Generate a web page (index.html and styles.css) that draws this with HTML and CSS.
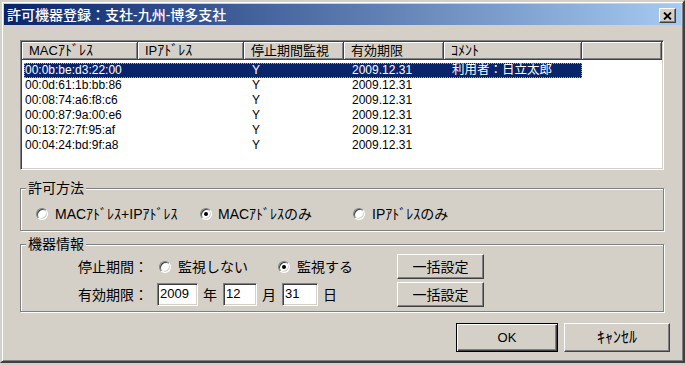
FILE: index.html
```html
<!DOCTYPE html>
<html lang="ja">
<head>
<meta charset="utf-8">
<title>許可機器登録</title>
<link rel="stylesheet" href="styles.css">
</head>
<body>
<div class="window">
  <div class="titlebar">
    <span class="title">許可機器登録：支社-九州-博多支社</span>
    <button class="close" type="button" aria-label="閉じる">
      <svg width="9" height="8" viewBox="0 0 9 8"><path d="M1 0.5L8 7.5M8 0.5L1 7.5" stroke="#000" stroke-width="1.8" fill="none"/></svg>
    </button>
  </div>
  <div class="client">
    <div class="listview">
      <div class="lv-head">
        <div class="hcell c1">MAC<span class="kana">ｱﾄﾞﾚｽ</span></div>
        <div class="hcell c2">IP<span class="kana">ｱﾄﾞﾚｽ</span></div>
        <div class="hcell c3">停止期間監視</div>
        <div class="hcell c4">有効期限</div>
        <div class="hcell c5"><span class="kana">ｺﾒﾝﾄ</span></div>
        <div class="hcell c6"></div>
      </div>
      <div class="lv-body">
        <div class="row selected"><span class="cell c1">00:0b:be:d3:22:00</span><span class="cell c2"></span><span class="cell c3">Y</span><span class="cell c4">2009.12.31</span><span class="cell c5 cjk">利用者：日立太郎</span></div>
        <div class="row"><span class="cell c1">00:0d:61:1b:bb:86</span><span class="cell c2"></span><span class="cell c3">Y</span><span class="cell c4">2009.12.31</span><span class="cell c5"></span></div>
        <div class="row"><span class="cell c1">00:08:74:a6:f8:c6</span><span class="cell c2"></span><span class="cell c3">Y</span><span class="cell c4">2009.12.31</span><span class="cell c5"></span></div>
        <div class="row"><span class="cell c1">00:00:87:9a:00:e6</span><span class="cell c2"></span><span class="cell c3">Y</span><span class="cell c4">2009.12.31</span><span class="cell c5"></span></div>
        <div class="row"><span class="cell c1">00:13:72:7f:95:af</span><span class="cell c2"></span><span class="cell c3">Y</span><span class="cell c4">2009.12.31</span><span class="cell c5"></span></div>
        <div class="row"><span class="cell c1">00:04:24:bd:9f:a8</span><span class="cell c2"></span><span class="cell c3">Y</span><span class="cell c4">2009.12.31</span><span class="cell c5"></span></div>
      </div>
    </div>

    <div class="group group-method">
      <span class="group-label">許可方法</span>
      <div class="radio-row">
        <label class="radio-item m1"><span class="radio"></span>MACｱﾄﾞﾚｽ+IPｱﾄﾞﾚｽ</label>
        <label class="radio-item m2"><span class="radio checked"></span>MACｱﾄﾞﾚｽのみ</label>
        <label class="radio-item m3"><span class="radio"></span>IPｱﾄﾞﾚｽのみ</label>
      </div>
    </div>

    <div class="group group-info">
      <span class="group-label">機器情報</span>
      <div class="info-grid">
        <span class="field-label">停止期間：</span>
        <div class="field radios">
          <label class="radio-item s1"><span class="radio"></span>監視しない</label>
          <label class="radio-item s2"><span class="radio checked"></span>監視する</label>
        </div>
        <button class="btn bulk" type="button">一括設定</button>

        <span class="field-label">有効期限：</span>
        <div class="field dates">
          <span class="textbox w-year">2009</span><span class="unit">年</span>
          <span class="textbox w-month">12</span><span class="unit">月</span>
          <span class="textbox w-day">31</span><span class="unit">日</span>
        </div>
        <button class="btn bulk" type="button">一括設定</button>
      </div>
    </div>

    <div class="footer">
      <button class="btn default ok" type="button">OK</button>
      <button class="btn cancel" type="button">ｷｬﾝｾﾙ</button>
    </div>
  </div>
</div>
</body>
</html>
```

FILE: styles.css
```css
* { box-sizing: border-box; }

html, body {
  margin: 0;
  padding: 0;
  background: #d4d0c8;
}

body {
  font-family: "Liberation Sans", "Noto Sans CJK JP", sans-serif;
  font-size: 14px;
  color: #000;
}

.window {
  width: 685px;
  height: 363px;
  border: 2px solid;
  border-color: #d4d0c8 #404040 #404040 #d4d0c8;
  box-shadow: inset 1px 1px #fff, inset -1px -1px #808080;
  padding: 2px;
  background: #d4d0c8;
  display: flex;
  flex-direction: column;
}

/* Title bar */
.titlebar {
  height: 21px;
  display: flex;
  align-items: center;
  justify-content: space-between;
  padding: 0 5px 0 3px;
  background: linear-gradient(to right, #0a246a, #a6caf0);
}

.title {
  color: #fff;
  font-size: 14px;
  line-height: 16px;
  font-weight: 500;
  white-space: nowrap;
}

.close {
  width: 17px;
  height: 15px;
  margin-top: 2px;
  padding: 0;
  display: flex;
  align-items: center;
  justify-content: center;
  background: #d4d0c8;
  border: 1px solid;
  border-color: #fff #404040 #404040 #fff;
  box-shadow: inset -1px -1px #808080;
}

/* Client area */
.client {
  display: flex;
  flex-direction: column;
  padding: 15px 11px 0 16px;
}

/* List view */
.listview {
  width: 644px;
  height: 130px;
  border: 1px solid;
  border-color: #808080 #fff #fff #808080;
  box-shadow: inset 1px 1px #404040, inset -1px -1px #d4d0c8;
  padding: 1px;
  background: #fff;
  overflow: hidden;
}

.lv-head {
  display: flex;
  height: 18px;
}

.hcell {
  height: 18px;
  padding-left: 7px;
  font-size: 13px;
  line-height: 17px;
  white-space: nowrap;
  background: #d4d0c8;
  border-right: 1px solid #404040;
  border-bottom: 1px solid #404040;
  box-shadow: inset 1px 1px #fff, inset -1px -1px #808080;
}

.hcell .kana { font-size: 14px; }

.hcell.c1 { width: 116px; }
.hcell.c2 { width: 106px; }
.hcell.c3 { width: 100px; }
.hcell.c4 { width: 100px; }
.hcell.c5 { width: 138px; }
.hcell.c6 { flex: 1; }

.lv-body {
  padding: 3px 0 0 2px;
}

.row {
  display: flex;
  width: 558px;
  height: 15px;
  font-size: 12px;
  line-height: 15px;
  white-space: nowrap;
}

.row.selected {
  background: #0a246a;
  color: #fff;
  outline: 1px dotted #9aa6c4;
  outline-offset: -1px;
}

.cell { display: block; overflow: hidden; }
.cell.c1 { width: 114px; padding-left: 1px; }
.cell.c2 { width: 106px; }
.cell.c3 { width: 100px; padding-left: 8px; }
.cell.c4 { width: 100px; padding-left: 8px; }
.cell.c5 { width: 138px; padding-left: 8px; }
.cell.cjk { font-size: 12.5px; }

/* Group boxes */
.group {
  position: relative;
  width: 644px;
  border: 1px solid #808080;
  box-shadow: inset 1px 1px #fff, 1px 1px #fff;
}

.group-label {
  position: absolute;
  top: -9px;
  left: 5px;
  padding: 0 2px;
  background: #d4d0c8;
  font-size: 14px;
  line-height: 16px;
}

.group-method {
  margin-top: 18px;
  height: 43px;
  padding: 17px 0 0 15px;
}

.radio-row {
  display: flex;
  align-items: center;
  height: 16px;
}

.radio-item {
  display: flex;
  align-items: center;
  gap: 7px;
  font-size: 14px;
  line-height: 16px;
  white-space: nowrap;
}

.radio-item.m1 { width: 164px; }
.radio-item.m2 { width: 153px; gap: 6px; }
.radio-item.s1 { width: 119px; gap: 7px; }
.radio-item.s2 { gap: 7px; }

.radio {
  position: relative;
  flex: none;
  width: 12px;
  height: 12px;
  border-radius: 50%;
  background: #fff;
  border: 1px solid;
  border-color: #808080 #fff #fff #808080;
  box-shadow: inset 1px 1px #404040, inset -1px -1px #d4d0c8;
}

.radio.checked::after {
  content: "";
  position: absolute;
  left: 3px;
  top: 3px;
  width: 4px;
  height: 4px;
  border-radius: 50%;
  background: #000;
}

.group-info {
  margin-top: 13px;
  height: 68px;
  padding: 9px 0 0 57px;
}

.info-grid {
  display: grid;
  grid-template-columns: 79px 240px 87px;
  grid-template-rows: 25px 25px;
  row-gap: 3px;
  align-items: center;
}

.field-label {
  font-size: 14px;
  line-height: 16px;
  white-space: nowrap;
}

.field {
  display: flex;
  align-items: center;
}

.field.radios { padding-left: 2px; }

.textbox {
  display: block;
  height: 23px;
  padding: 1px 1px 0 2px;
  background: #fff;
  border: 1px solid;
  border-color: #808080 #fff #fff #808080;
  box-shadow: inset 1px 1px #404040, inset -1px -1px #d4d0c8;
  font-size: 13px;
  line-height: 18px;
}

.textbox.w-year { width: 41px; }
.textbox.w-month { width: 34px; }
.textbox.w-day { width: 36px; }

.unit {
  font-size: 14px;
  line-height: 16px;
  margin: 0 6px 0 5px;
}

/* Buttons */
.btn {
  font-family: "Liberation Sans", "Noto Sans CJK JP", sans-serif;
  font-size: 14px;
  color: #000;
  background: #d4d0c8;
  border: 1px solid;
  border-color: #fff #404040 #404040 #fff;
  box-shadow: inset -1px -1px #808080, inset 1px 1px #d4d0c8;
  padding: 0;
  line-height: 16px;
}

.btn.bulk {
  width: 87px;
  height: 25px;
}

.footer {
  display: flex;
  justify-content: flex-end;
  gap: 6px;
  margin-top: 11px;
}

.btn.ok {
  width: 102px;
  height: 29px;
  font-size: 13px;
}

.btn.default {
  border: 1px solid #000;
  box-shadow: inset 1px 1px #fff, inset -1px -1px #404040, inset -2px -2px #808080;
}

.btn.cancel {
  width: 106px;
  height: 29px;
  font-size: 16px;
}
```
